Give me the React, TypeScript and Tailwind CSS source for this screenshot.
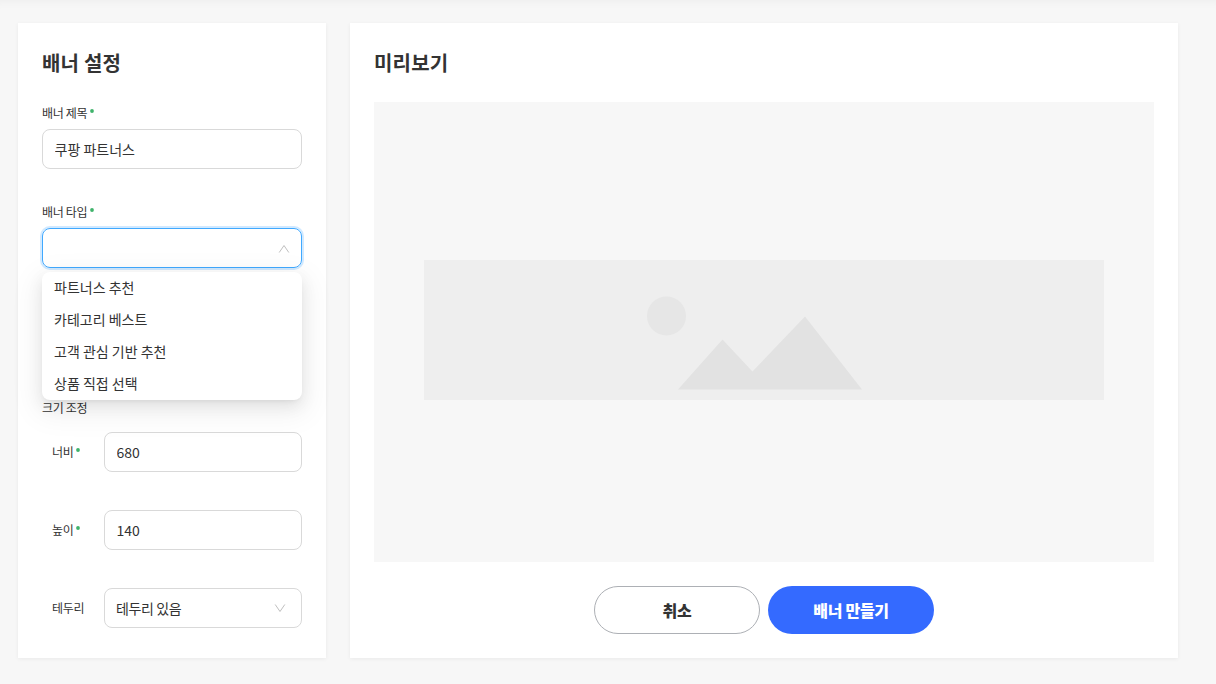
import React, { useState } from "react";

const bannerTypes = [
  "파트너스 추천",
  "카테고리 베스트",
  "고객 관심 기반 추천",
  "상품 직접 선택",
];

type LabelProps = {
  text: string;
  required?: boolean;
  className?: string;
};

const Label = ({ text, required, className = "" }: LabelProps) => (
  <label
    className={`flex h-5 items-center text-xs tracking-[-0.3px] ${className}`}
  >
    {text}
    {required && (
      <svg viewBox="0 0 4 4" className="mb-1 ml-[3px] h-1 w-1">
        <circle cx="2" cy="2" r="1.9" fill="#3fb36b" />
      </svg>
    )}
  </label>
);

const Arrow = ({ open, className = "" }: { open?: boolean; className?: string }) => (
  <svg
    viewBox="0 0 12 10"
    className={`h-[10px] w-3 ${className}`}
    fill="none"
    stroke="#bfbfbf"
    strokeWidth="1"
  >
    <path d={open ? "M1.2 8.5 6 1.5l4.8 7" : "M1.2 1.5 6 8.5l4.8-7"} />
  </svg>
);

const SizeField = ({ label, value }: { label: string; value: string }) => (
  <div className="flex items-center">
    <Label text={label} required className="w-[62px] pl-2.5" />
    <input
      defaultValue={value}
      className="h-10 w-[198px] rounded-lg border border-[#d9d9d9] px-[11.5px] text-sm outline-none"
    />
  </div>
);

const BannerSettings = () => {
  const [open, setOpen] = useState(true);
  const [bannerType, setBannerType] = useState("");

  const handleSelect = (type: string) => {
    setBannerType(type);
    setOpen(false);
  };

  return (
    <section className="h-[635px] w-[308px] bg-white px-6 pt-6 shadow-[0_1px_4px_rgba(0,0,0,0.06)]">
      <h2 className="h-8 text-xl leading-8 font-bold tracking-[0.2px]">배너 설정</h2>

      <Label text="배너 제목" required className="mt-6" />
      <input
        defaultValue="쿠팡 파트너스"
        className="mt-1.5 block h-10 w-full rounded-lg border border-[#d9d9d9] px-[11.5px] text-sm outline-none"
      />

      <Label text="배너 타입" required className="mt-[33px]" />
      <div className="relative mt-1.5">
        <button
          type="button"
          onClick={() => setOpen(!open)}
          className="flex h-10 w-full items-center rounded-lg border border-[#40a9ff] pr-[11px] pl-[11px] text-sm shadow-[0_0_0_2px_rgba(24,144,255,0.2)]"
        >
          {bannerType}
          <Arrow open={open} className="mt-px ml-auto" />
        </button>
        {open && (
          <ul className="absolute top-11 left-0 z-10 w-full rounded-lg bg-white shadow-[0_3px_6px_-4px_rgba(0,0,0,0.12),0_6px_16px_0_rgba(0,0,0,0.08),0_9px_28px_8px_rgba(0,0,0,0.05)]">
            {bannerTypes.map((type) => (
              <li
                key={type}
                className="h-8 cursor-pointer px-3 text-sm leading-[31px]"
                onClick={() => handleSelect(type)}
              >
                {type}
              </li>
            ))}
          </ul>
        )}
      </div>

      <Label text="크기 조정" className="mt-[130px]" />
      <div className="mt-3.5 flex flex-col gap-[38px]">
        <SizeField label="너비" value="680" />
        <SizeField label="높이" value="140" />
        <div className="flex items-center">
          <Label text="테두리" className="w-[62px] pl-2.5" />
          <button
            type="button"
            className="flex h-10 w-[198px] items-center rounded-lg border border-[#d9d9d9] pr-[15px] pb-px pl-[11px] text-sm tracking-[-0.4px]"
          >
            테두리 있음
            <Arrow className="ml-auto" />
          </button>
        </div>
      </div>
    </section>
  );
};

const Preview = () => (
  <section className="h-[635px] w-[828px] bg-white p-6 shadow-[0_1px_4px_rgba(0,0,0,0.06)]">
    <h2 className="h-8 text-xl leading-8 font-bold tracking-[0.2px]">미리보기</h2>
    <div className="mt-[23px] flex h-[460px] items-center justify-center bg-[#f7f7f7] pb-[5px]">
      <svg viewBox="0 0 680 140" className="h-[140px] w-[680px] bg-[#eeeeee]">
        <circle cx="242.5" cy="56" r="19.5" fill="#e6e6e6" />
        <path d="M254 129.5 298.5 79.5 328.5 111.5 381 56.5 438 129.5Z" fill="#e2e2e2" />
      </svg>
    </div>
    <div className="mt-6 flex justify-center gap-2">
      <button className="h-12 w-[166px] rounded-full border border-[#adb0b5] text-base font-black tracking-[-0.3px]">
        취소
      </button>
      <button className="h-12 w-[166px] rounded-full bg-[#346aff] text-base font-black tracking-[-0.3px] text-white">
        배너 만들기
      </button>
    </div>
  </section>
);

const App = () => {
  return (
    <main className="flex h-[684px] gap-6 bg-[#f7f7f7] pt-[23px] pl-[18px] font-['Noto_Sans_CJK_KR',sans-serif] text-[#333333] shadow-[inset_0_8px_8px_-6px_rgba(0,0,0,0.04)]">
      <BannerSettings />
      <Preview />
    </main>
  );
};

export default App;
